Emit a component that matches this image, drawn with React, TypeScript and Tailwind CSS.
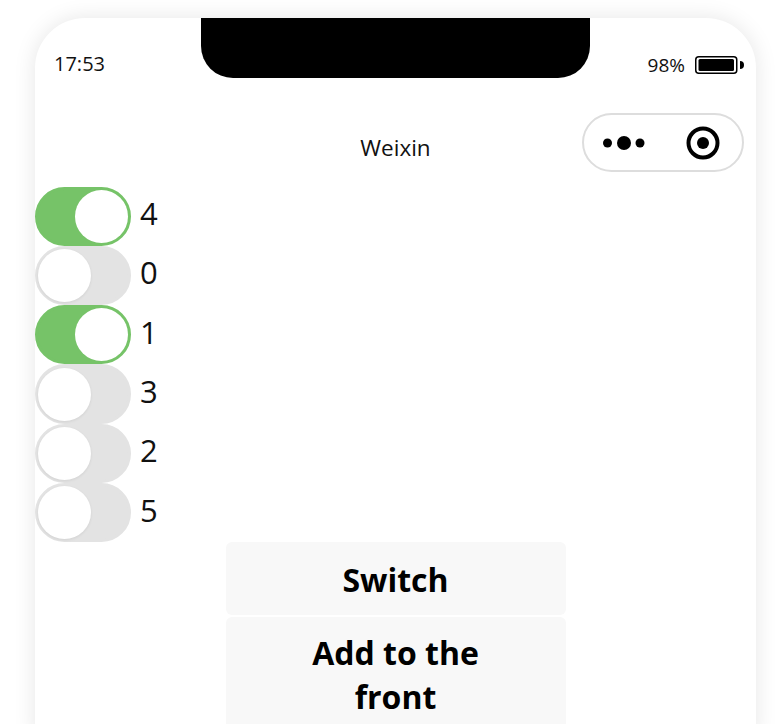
import React from 'react';

const font = "font-['Segoe_UI','Open_Sans','Noto_Sans',sans-serif]";

const switches = [
  { label: '4', on: true },
  { label: '0', on: false },
  { label: '1', on: true },
  { label: '3', on: false },
  { label: '2', on: false },
  { label: '5', on: false },
];

const Toggle: React.FC<{ on: boolean }> = ({ on }) => (
  <div
    className={`h-[59.33px] w-[96px] shrink-0 rounded-full border-[3px] flex items-center ${
      on ? 'bg-[#76c368] border-[#76c368] justify-end' : 'bg-[#e3e3e3] border-[#e3e3e3] justify-start'
    }`}
  >
    <div
      className={`h-[53px] w-[53px] rounded-full bg-white ${
        on ? '' : 'shadow-[0_1px_3px_rgba(0,0,0,0.08)]'
      }`}
    />
  </div>
);

export default function App() {
  return (
    <div className={`h-[724px] w-[781px] overflow-hidden bg-white pt-[18px] ${font}`}>
      <div className="ml-[35px] h-[720px] w-[721px] rounded-t-[50px] bg-white shadow-[0_0_22px_rgba(0,0,0,0.1)] overflow-hidden">
        {/* Status bar */}
        <div className="relative h-[78px] pl-[19px] pr-[12px] flex items-start justify-between">
          <span className="mt-[32px] text-[20px] leading-[28px] text-[#111]">17:53</span>
          <div className="absolute left-[166px] top-0 h-[60px] w-[389px] rounded-b-[32px] bg-black" />
          <div className="mt-[33px] flex items-center gap-[10px]">
            <span className="text-[19px] leading-[28px] text-[#111]">98%</span>
            <svg width="49" height="18" viewBox="0 0 49 18">
              <rect x="0.75" y="0.75" width="41" height="16.5" rx="3" fill="none" stroke="#000" strokeWidth="1.5" />
              <rect x="3.5" y="3" width="35.5" height="12" rx="1.5" fill="#000" />
              <path d="M45 5 a4 4 0 0 1 0 8 z" fill="#000" />
            </svg>
          </div>
        </div>

        {/* Nav bar */}
        <div className="relative h-[90.5px] flex items-center justify-center">
          <span className="mt-[13px] text-[22.5px] text-[#111]">Weixin</span>
          <div className="absolute left-[547px] top-[17px] h-[59px] w-[162px] rounded-full border-2 border-[#dddddd] flex items-center justify-between pl-[19px] pr-[22px]">
            <svg width="42" height="16" viewBox="0 0 42 16">
              <circle cx="4.5" cy="8" r="4.5" fill="#000" />
              <circle cx="21" cy="8" r="7" fill="#000" />
              <circle cx="37" cy="8" r="4.5" fill="#000" />
            </svg>
            <svg width="34" height="34" viewBox="0 0 34 34">
              <circle cx="17" cy="17" r="14.5" fill="none" stroke="#000" strokeWidth="4" />
              <circle cx="17" cy="17" r="6" fill="#000" />
            </svg>
          </div>
        </div>

        {/* Switch list */}
        <div className="flex flex-col">
          {switches.map((s) => (
            <div key={s.label} className="flex items-center gap-[9px] h-[59.33px]">
              <Toggle on={s.on} />
              <span className="mb-[6px] text-[31px] text-[#111]">{s.label}</span>
            </div>
          ))}
        </div>

        {/* Buttons */}
        <div className="flex flex-col items-center gap-[2px] w-[721px]">
          <div className="w-[340px] h-[72.5px] pt-[2px] rounded-[6px] bg-[#f8f8f8] flex items-center justify-center text-[32px] font-bold text-black">
            Switch
          </div>
          <div className="w-[340px] py-[14px] rounded-[6px] bg-[#f8f8f8] text-center text-[32px] leading-[44px] font-bold text-black">
            Add to the
            <br />
            front
          </div>
        </div>
      </div>
    </div>
  );
}
